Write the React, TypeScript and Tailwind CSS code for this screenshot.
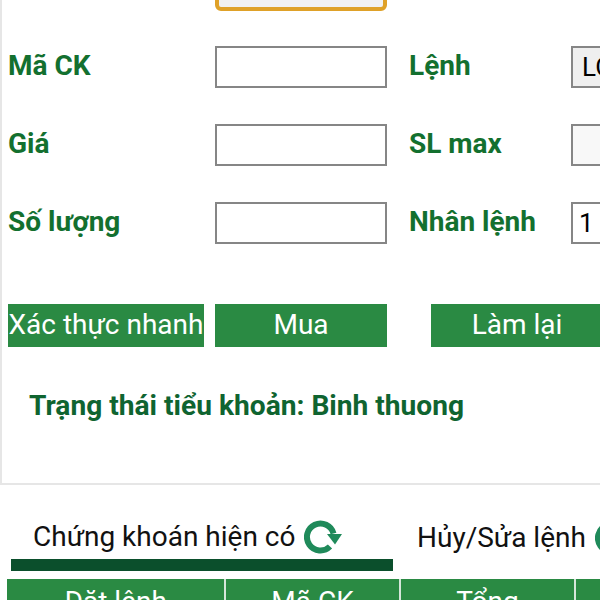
import React from "react";

function Refresh({ className }: { className: string }) {
  return (
    <svg className={className} viewBox="0 0 38 36" fill="none">
      <path d="M26 27.5 A13.5 13.5 0 1 1 29.5 14.5" stroke="#1f8a5a" strokeWidth="6" fill="none" />
      <path d="M23 15 H38 L31 25.5 Z" fill="#1f8a5a" />
    </svg>
  );
}

const labelCls = "font-['Roboto',sans-serif] font-bold text-[28px] leading-[40px] h-[42px] text-[#13702f] whitespace-nowrap";
const inputCls = "h-[42px] w-[172px] shrink-0 border-2 border-[#868686] bg-white";
const btnCls = "h-[43px] bg-[#2a8a43] text-white font-['Roboto',sans-serif] text-[28px] leading-[41px] text-center whitespace-nowrap";

function Row({ label, label2, right, mt }: { label: string; label2?: string; right?: React.ReactNode; mt: string }) {
  return (
    <div className={`flex ${mt}`}>
      <div className={`w-[207px] shrink-0 ${labelCls}`}>{label}</div>
      <div className={inputCls} />
      <div className={`ml-[22px] w-[162px] shrink-0 ${labelCls}`}>{label2}</div>
      {right}
    </div>
  );
}

export default function App() {
  return (
    <div className="w-[600px] h-[600px] overflow-hidden bg-white font-['Roboto',sans-serif]">
      <div className="w-[720px] h-[485px] border-l-2 border-b-2 border-[#e6e6e6] pl-[6px]">
        <div className="flex h-[11px] items-end">
          <div className="ml-[207px] h-[42px] w-[172px] shrink-0 rounded-[6px] border-4 border-[#dfa128] bg-[#f1f1f1]" />
        </div>
        <Row
          mt="mt-[35px]"
          label="Mã CK"
          label2="Lệnh"
          right={
            <div className="h-[42px] w-[120px] border-2 border-[#868686] bg-[#efefef] pl-[9px] text-[26px] leading-[38px] text-black">LO</div>
          }
        />
        <Row
          mt="mt-[36px]"
          label="Giá"
          label2="SL max"
          right={<div className="h-[42px] w-[120px] border-2 border-[#868686] bg-[#f8f8f8]" />}
        />
        <Row
          mt="mt-[36px]"
          label="Số lượng"
          label2="Nhân lệnh"
          right={
            <div className="h-[42px] w-[120px] border-2 border-[#868686] bg-white pl-[6px] text-[26px] leading-[38px] text-black">1</div>
          }
        />
        <div className="mt-[60px] flex">
          <div className={`w-[196px] shrink-0 ${btnCls}`}>Xác thực nhanh</div>
          <div className={`ml-[11px] w-[172px] shrink-0 ${btnCls}`}>Mua</div>
          <div className={`ml-[44px] w-[172px] shrink-0 ${btnCls}`}>Làm lại</div>
        </div>
        <div className="mt-[39px] pl-[21px] text-[28.15px] font-bold leading-[40px] text-[#0f6430] whitespace-nowrap">
          Trạng thái tiểu khoản: Binh thuong
        </div>
      </div>
      <div className="mt-[32px] flex w-[720px] pl-[11px]">
        <div className="w-[382px] shrink-0">
          <div className="flex h-[39px] items-center pl-[22px] text-[28px] leading-[39px] text-[#111] whitespace-nowrap">
            Chứng khoán hiện có
            <Refresh className="ml-[9px] h-[36px] w-[38px]" />
          </div>
          <div className="mt-[3px] h-[12px] bg-[#0b4f2c]" />
        </div>
        <div className="ml-[24px] flex h-[41px] items-center text-[28px] leading-[41px] text-[#111] whitespace-nowrap">
          Hủy/Sửa lệnh
          <Refresh className="ml-[9px] h-[36px] w-[38px]" />
        </div>
      </div>
      <div className="ml-[7px] mt-[8px] flex h-[40px] w-[720px] bg-[#2a8a43] text-center text-[28px] leading-[45px] text-white">
        <div className="w-[219px] border-r-2 border-[#d5e6da]">Đặt lệnh</div>
        <div className="w-[175px] border-r-2 border-[#d5e6da]">Mã CK</div>
        <div className="w-[175px] border-r-2 border-[#d5e6da]">Tổng</div>
      </div>
    </div>
  );
}
